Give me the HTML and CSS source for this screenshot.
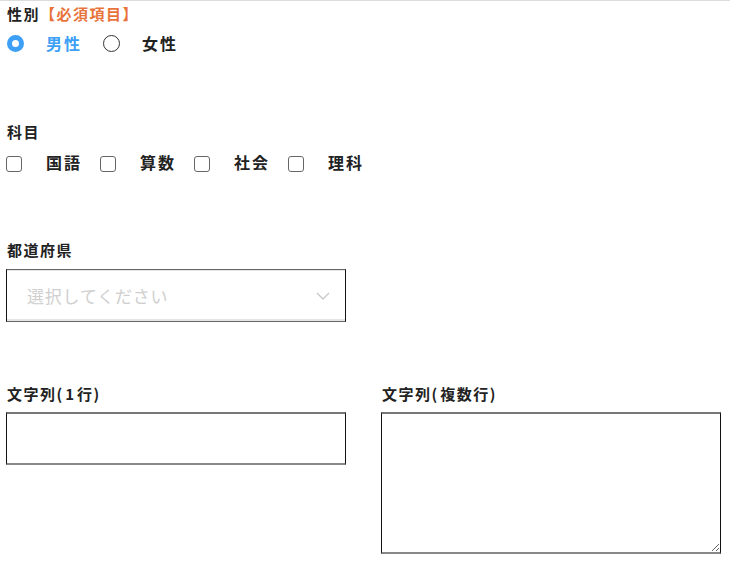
FILE: index.html
```html
<!DOCTYPE html>
<html lang="ja">
<head>
<meta charset="utf-8">
<link rel="stylesheet" href="styles.css">
</head>
<body>
<form class="form">
  <div class="field f-gender">
    <div class="label">性別<span class="req">【必須項目】</span></div>
    <div class="choices">
      <label class="choice"><input type="radio" name="g" class="radio" checked><span class="txt checked">男性</span></label>
      <label class="choice"><input type="radio" name="g" class="radio"><span class="txt">女性</span></label>
    </div>
  </div>

  <div class="field f-subject">
    <div class="label">科目</div>
    <div class="choices checks">
      <label class="choice"><input type="checkbox" class="check"><span class="txt">国語</span></label>
      <label class="choice"><input type="checkbox" class="check"><span class="txt">算数</span></label>
      <label class="choice"><input type="checkbox" class="check"><span class="txt">社会</span></label>
      <label class="choice"><input type="checkbox" class="check"><span class="txt">理科</span></label>
    </div>
  </div>

  <div class="field f-pref">
    <div class="label">都道府県</div>
    <div class="select">
      <span class="placeholder">選択してください</span>
      <svg class="chev" width="14" height="8" viewBox="0 0 14 8"><path d="M1 1 L7 7 L13 1" fill="none" stroke="#c8c8c8" stroke-width="1.3"/></svg>
    </div>
  </div>

  <div class="field f-text">
    <div class="col">
      <div class="label">文字列<span class="paren">(</span><span class="wide">1</span>行<span class="paren">)</span></div>
      <input type="text" class="input">
    </div>
    <div class="col">
      <div class="label">文字列<span class="paren">(</span>複数行<span class="paren">)</span></div>
      <textarea class="textarea"></textarea>
    </div>
  </div>
</form>
</body>
</html>
```
FILE: styles.css
```css
html, body {
  margin: 0;
  padding: 0;
  background: #fff;
}
body {
  border-top: 1px solid #dcdcdc;
  font-family: "Noto Sans CJK JP", "Noto Sans", sans-serif;
  color: #222;
}
.form {
  padding: 2px 6px 0 6px;
}
.label {
  font-size: 15px;
  line-height: 22px;
  font-weight: 700;
  padding-left: 1px;
  letter-spacing: 1.5px;
}
.paren {
  letter-spacing: 3px;
}
.wide {
  letter-spacing: 3px;
}
.req {
  color: #e8733a;
}
.choices {
  display: flex;
  align-items: center;
  height: 22px;
  margin-top: 7px;
  padding-left: 1px;
}
.choice {
  display: flex;
  align-items: center;
  font-size: 16px;
  font-weight: 700;
  line-height: 22px;
}
.txt {
  letter-spacing: 2px;
}
.txt.checked {
  color: #3d9ff5;
}
.radio {
  appearance: none;
  -webkit-appearance: none;
  margin: 0 22px 0 0;
  width: 17px;
  height: 17px;
  border-radius: 50%;
  border: 1.5px solid #333;
  box-sizing: border-box;
  background: #fff;
}
.radio:checked {
  border: 5.5px solid #3d9ff5;
  background: #fff;
}
.f-gender .choice + .choice {
  margin-left: 21px;
}
.f-subject {
  margin-top: 67px;
}
.checks {
  margin-top: 8px;
  align-items: flex-start;
  padding-left: 0;
}
.check {
  appearance: none;
  -webkit-appearance: none;
  margin: 5px 24px 0 0;
  width: 16px;
  height: 16px;
  border: 1.5px solid #666;
  border-radius: 3px;
  box-sizing: border-box;
  background: #fff;
}
.checks .choice {
  align-items: flex-start;
}
.checks .choice + .choice {
  margin-left: 18px;
}
.f-pref {
  margin-top: 66px;
}
.select {
  margin-top: 8px;
  width: 340px;
  height: 53px;
  box-sizing: border-box;
  border: 1px solid #111;
  border-top-color: #666;
  border-bottom-color: #666;
  box-shadow: inset 0 -2px 0 #e6e6e6, inset 0 1px 0 #e6e6e6;
  display: flex;
  align-items: center;
  justify-content: space-between;
  padding: 0 15px 0 20px;
}
.placeholder {
  font-size: 17px;
  color: #cfcfcf;
  letter-spacing: 0.8px;
}
.chev {
  display: block;
}
.f-text {
  margin-top: 61px;
  display: flex;
  gap: 35px;
}
.col {
  width: 340px;
  display: flex;
  flex-direction: column;
}
.input, .textarea {
  margin: 7px 0 0 0;
  width: 340px;
  box-sizing: border-box;
  border: 1px solid #111;
  border-top: 2px solid #777;
  border-bottom: 2px solid #888;
  background: #fff;
  padding: 0;
  font-family: inherit;
  outline: none;
}
.input {
  height: 53px;
}
.textarea {
  height: 142px;
  resize: both;
}
```
